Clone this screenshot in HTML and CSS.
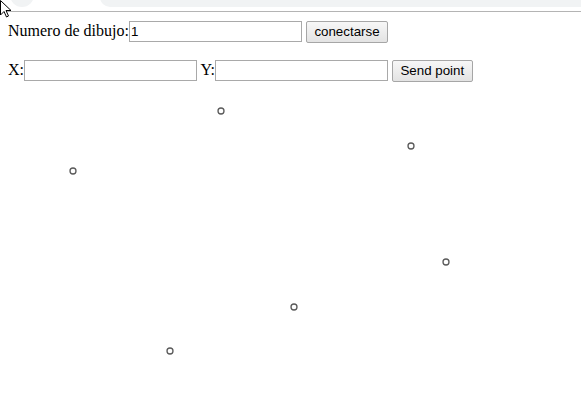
FILE: index.html
```html
<!DOCTYPE html>
<html>
<head>
<meta charset="utf-8">
<link rel="stylesheet" href="styles.css">
</head>
<body>
<div class="chrome">
  <div class="tab-dot"></div>
  <div class="omnibox"></div>
  <svg class="cursor" width="12" height="18" viewBox="0 0 12 18"><path d="M0.5 0.5 L0.5 15 L4 11.5 L6.5 17 L8.5 16 L6 10.5 L11 10.5 Z" fill="#fff" stroke="#000" stroke-width="1"/></svg>
</div>
<main class="page">
  <div class="row">Numero de dibujo:<input class="field" type="text" value="1"> <button class="btn">conectarse</button></div>
  <div class="row row-second">X:<input class="field" type="text"> Y:<input class="field" type="text"> <button class="btn">Send point</button></div>
  <svg class="board" width="581" height="316" viewBox="0 0 581 316">
    <g fill="none" stroke="#5a5a5a" stroke-width="1.3">
      <circle cx="221" cy="29" r="3"/>
      <circle cx="411" cy="64" r="3"/>
      <circle cx="73" cy="89" r="3"/>
      <circle cx="446" cy="180" r="3"/>
      <circle cx="294" cy="225" r="3"/>
      <circle cx="170" cy="269" r="3"/>
    </g>
  </svg>
</main>
</body>
</html>
```
FILE: styles.css
```css
html, body {
  margin: 0;
  padding: 0;
  background: #fff;
}
body {
  font-family: "Liberation Serif", "Times New Roman", serif;
  font-size: 16px;
  color: #000;
  overflow: hidden;
}
.chrome {
  position: relative;
  height: 11px;
  border-bottom: 1px solid #b4b4b4;
  background: #fff;
}
.tab-dot {
  position: absolute;
  left: 10px;
  top: -10px;
  width: 24px;
  height: 17px;
  border-radius: 0 0 12px 12px;
  background: #f1f3f4;
}
.omnibox {
  position: absolute;
  left: 100px;
  right: -20px;
  top: -10px;
  height: 17px;
  border-radius: 0 0 0 10px;
  background: #f1f3f4;
}
.cursor {
  position: absolute;
  left: 0;
  top: 0;
}
.page {
  padding: 8px 8px 0;
}
.row {
  line-height: 22px;
  white-space: nowrap;
}
.row-second {
  margin-top: 16px;
}
.field {
  width: 169px;
  height: 17px;
  box-sizing: content-box;
  padding: 1px 1px;
  border: 1px solid #a9a9a9;
  font-family: "Liberation Sans", Arial, sans-serif;
  font-size: 13.33px;
  margin: 0;
  vertical-align: baseline;
}
.btn {
  font-family: "Liberation Sans", Arial, sans-serif;
  font-size: 13.33px;
  padding: 2px 7.5px 3px;
  margin: 0;
  border: 1px solid #a6a6a6;
  border-radius: 2px;
  background: linear-gradient(#f7f7f7, #e3e3e3);
  color: #000;
}
.board {
  display: block;
  margin-left: -8px;
}
```
